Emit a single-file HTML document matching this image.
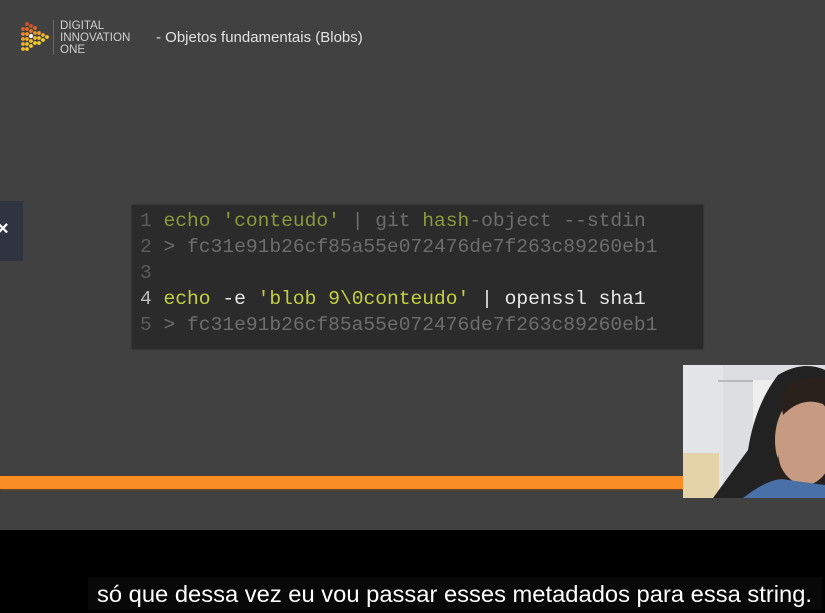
<!DOCTYPE html>
<html><head><meta charset="utf-8"><style>
html,body{margin:0;padding:0}
body{width:825px;height:613px;background:#414141;position:relative;overflow:hidden;font-family:"Liberation Sans",sans-serif}
.abs{position:absolute}
.code{left:132px;top:205px;width:571px;height:144px;background:#2b2b2b;box-shadow:0 0 2px #222}
.ln{position:absolute;left:0;font-family:"Liberation Mono","DejaVu Sans Mono",monospace;font-size:19.6px;white-space:pre;line-height:26px}
.g{color:#6d6d6d}.y{color:#8a9a3a}.Y{color:#c2d13e}.w{color:#e8e8e8}.n{color:#5c5c5c}
</style></head><body>
<svg class="abs" style="left:19px;top:20px" width="34" height="34" viewBox="0 0 34 34">
<g>
<circle cx="8" cy="4" r="1.9" fill="#d9532b"/><circle cx="12" cy="6" r="1.9" fill="#d9532b"/><circle cx="16" cy="8" r="1.9" fill="#dc6a2c"/>
<circle cx="4" cy="9" r="1.9" fill="#de5f2a"/><circle cx="8" cy="9" r="1.9" fill="#e06a2a"/><circle cx="12" cy="11" r="1.9" fill="#e3782c"/><circle cx="16" cy="13" r="1.9" fill="#e8902c"/><circle cx="20" cy="13" r="1.9" fill="#ee9f2c"/><circle cx="24" cy="15" r="1.9" fill="#f1b02b"/>
<circle cx="4" cy="14" r="1.9" fill="#e88a2b"/><circle cx="8" cy="14" r="1.9" fill="#ea952b"/><circle cx="12" cy="16" r="2" fill="#fff"/><circle cx="16" cy="18" r="1.9" fill="#f2bc2a"/><circle cx="20" cy="18" r="1.9" fill="#f4c72a"/><circle cx="24" cy="20" r="1.9" fill="#f5cf2a"/><circle cx="28" cy="17" r="1.9" fill="#f4c82a"/>
<circle cx="4" cy="19" r="1.9" fill="#eda22c"/><circle cx="8" cy="19" r="1.9" fill="#efad2b"/><circle cx="12" cy="21" r="1.9" fill="#f3c02a"/><circle cx="16" cy="23" r="1.9" fill="#f4c92a"/><circle cx="20" cy="23" r="1.9" fill="#f5d02a"/>
<circle cx="4" cy="24" r="1.9" fill="#f0b22b"/><circle cx="8" cy="24" r="1.9" fill="#f2bd2a"/><circle cx="12" cy="26" r="1.9" fill="#f4c92a"/>
<circle cx="4" cy="29" r="1.9" fill="#f2b92a"/><circle cx="8" cy="29" r="1.9" fill="#f3c52a"/>
</g></svg>
<div class="abs" style="left:53px;top:20px;width:1px;height:35px;background:#666"></div>
<div class="abs" style="left:60px;top:20px;color:#cfcfcf;font-size:11.6px;line-height:12px">DIGITAL<br>INNOVATION<br>ONE</div>
<div class="abs" style="left:156px;top:29px;color:#e2e2e2;font-size:15px">- Objetos fundamentais (Blobs)</div>

<div class="abs" style="left:0;top:201px;width:23px;height:60px;background:#2f3440"></div>
<div class="abs" style="left:-3px;top:218px;color:#fff;font-size:20px;font-weight:bold">×</div>

<div class="abs code">
<div class="ln" style="top:3px;left:8px"><span class="n">1</span> <span class="y">echo</span> <span class="y">'conteudo'</span> <span class="g">|</span> <span class="g">git</span> <span class="y">hash</span><span class="g">-object --stdin</span></div>
<div class="ln" style="top:29px;left:8px"><span class="n">2</span> <span class="g">&gt; fc31e91b26cf85a55e072476de7f263c89260eb1</span></div>
<div class="ln" style="top:55px;left:8px"><span class="n">3</span></div>
<div class="ln" style="top:81px;left:8px"><span class="w" style="color:#bbb">4</span> <span class="Y">echo</span> <span class="w">-e</span> <span class="Y">'blob 9\0conteudo'</span> <span class="w">|</span> <span class="w">openssl sha1</span></div>
<div class="ln" style="top:107px;left:8px"><span class="n">5</span> <span class="g">&gt; fc31e91b26cf85a55e072476de7f263c89260eb1</span></div>
</div>

<div class="abs" style="left:0;top:476px;width:683px;height:13px;background:#fb8d25;box-shadow:0 1px 2px #7a4a1a"></div>

<svg class="abs" style="left:683px;top:365px" width="142" height="133" viewBox="0 0 142 133">
<rect width="142" height="133" fill="#dcdedf"/>
<rect x="0" y="0" width="40" height="133" fill="#e4e5e6"/>
<rect x="35" y="15" width="60" height="2" fill="#b9b9b9"/>
<rect x="70" y="15" width="22" height="90" fill="#eeeeee"/>
<rect x="0" y="88" width="36" height="45" fill="#e4d2a8"/>
<path d="M30 133 L65 85 Q72 40 95 10 Q120 -5 142 5 L142 133 Z" fill="#222"/>
<ellipse cx="122" cy="75" rx="30" ry="45" fill="#c79a82"/>
<path d="M95 90 Q100 120 120 125 Q140 125 142 110 L142 133 L90 133 Z" fill="#2a211d"/>
<path d="M97 30 Q110 10 142 12 L142 40 Q120 30 100 50 Z" fill="#2a211d"/>
<path d="M60 133 Q90 110 105 115 L142 120 L142 133 Z" fill="#4a70a8"/>
</svg>

<div class="abs" style="left:0;top:530px;width:825px;height:83px;background:#000"></div>
<div class="abs" style="left:88px;top:577px;width:734px;height:33px;background:#080808"></div>
<div class="abs" style="left:97px;top:581px;color:#fff;font-size:23.5px;white-space:nowrap;transform-origin:0 0;transform:scaleX(1.0)" id="s">só que dessa vez eu vou passar esses metadados para essa string.</div>
<script>var s=document.getElementById('s');var w=s.getBoundingClientRect().width;s.style.transform='scaleX('+(715/w)+')';</script>
</body></html>
